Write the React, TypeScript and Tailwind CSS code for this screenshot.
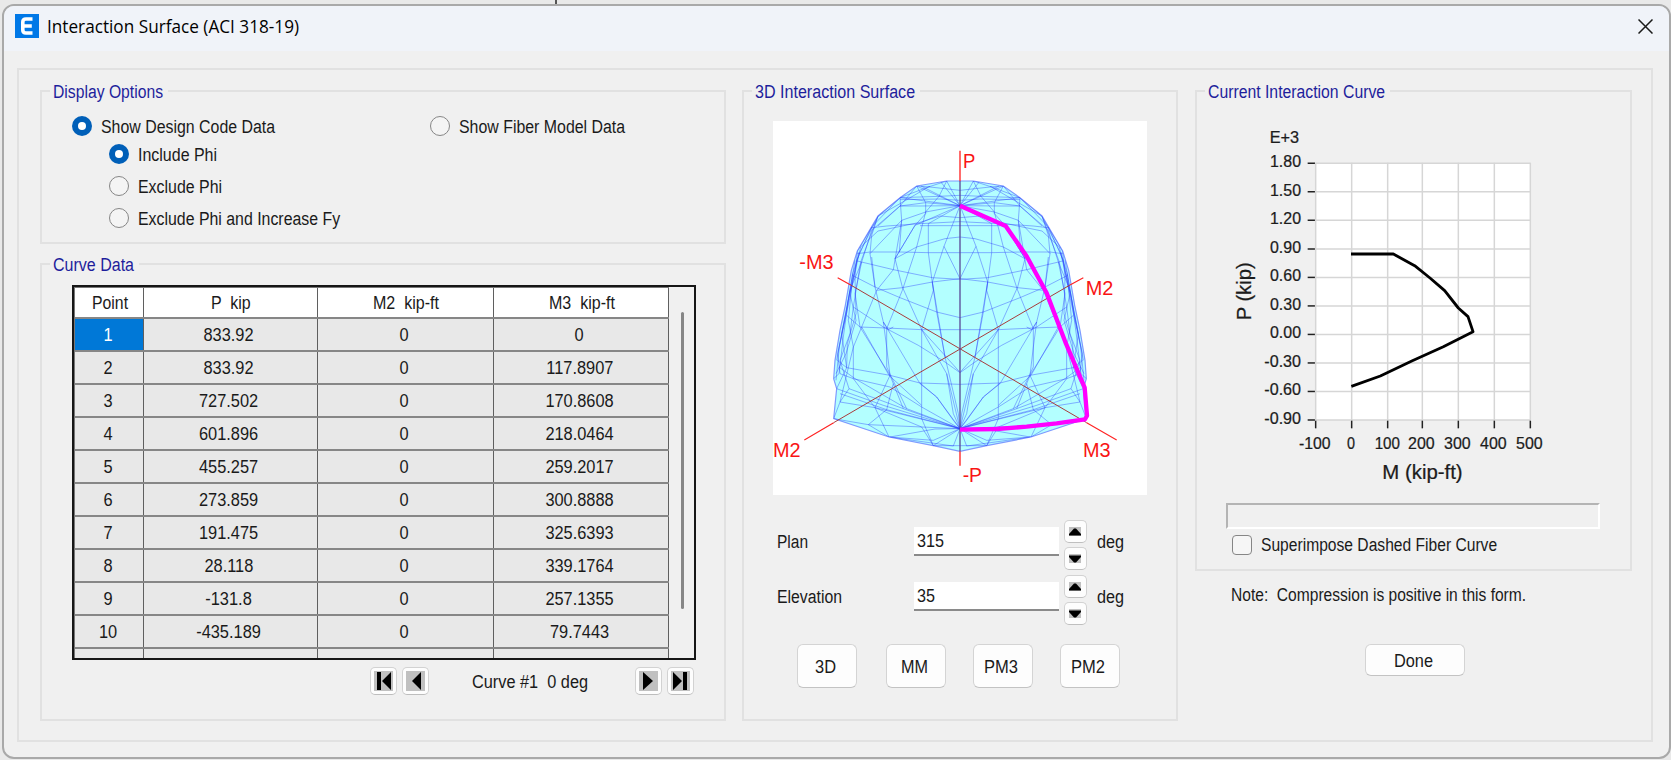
import { useLayoutEffect, useRef, useState } from "react";
import type { ReactNode } from "react";

/* A single line of text, condensed or stretched to an exact width. */
function Fit({ w, className = "", children }: { w: number; className?: string; children: ReactNode }) {
  const ref = useRef<HTMLSpanElement>(null);
  const [scale, setScale] = useState(1);
  useLayoutEffect(() => {
    if (ref.current && ref.current.offsetWidth > 0) setScale(w / ref.current.offsetWidth);
  }, [w]);
  return (
    <span className={`inline-block shrink-0 ${className}`} style={{ width: w }}>
      <span ref={ref} className="inline-block origin-left whitespace-pre" style={{ transform: `scaleX(${scale})` }}>
        {children}
      </span>
    </span>
  );
}

function Group({ title, w, className, children }: { title: string; w: number; className: string; children: ReactNode }) {
  return (
    <fieldset className={`border-2 border-[#e1e1e1] ${className}`}>
      <legend className="ml-[8px] h-5 pr-[5px] pl-[3px] pt-px leading-5 text-[#1e1e9c]">
        <Fit w={w}>{title}</Fit>
      </legend>
      {children}
    </fieldset>
  );
}

function Radio({ on = false, label, w }: { on?: boolean; label: string; w: number }) {
  return (
    <label className="flex h-5 items-center gap-[9px]">
      <span
        className={
          on
            ? "flex size-5 items-center justify-center rounded-full bg-[#005fb8]"
            : "flex size-5 items-center justify-center rounded-full border-[1.5px] border-[#868686] bg-[#f4f4f4]"
        }
      >
        {on && <span className="size-[8px] rounded-full bg-white" />}
      </span>
      <Fit w={w} className="mt-px leading-5">
        {label}
      </Fit>
    </label>
  );
}

const rows: [string, string, string, string][] = [
  ["1", "833.92", "0", "0"],
  ["2", "833.92", "0", "117.8907"],
  ["3", "727.502", "0", "170.8608"],
  ["4", "601.896", "0", "218.0464"],
  ["5", "455.257", "0", "259.2017"],
  ["6", "273.859", "0", "300.8888"],
  ["7", "191.475", "0", "325.6393"],
  ["8", "28.118", "0", "339.1764"],
  ["9", "-131.8", "0", "257.1355"],
  ["10", "-435.189", "0", "79.7443"],
];

const cell = "flex items-center justify-center border-r border-[#5f5f5f] pr-[3px]";
const firstCell = "flex items-center justify-center border-r border-[#5f5f5f] pr-px";
const squeeze = "inline-block scale-x-[.91]";

function CurveTable() {
  return (
    <div className="ml-[30px] mt-[11px] flex h-[375px] w-[624px] overflow-hidden border-2 border-[#161616]">
      <div className="w-[595px] shrink-0 border-l border-t border-[#777]">
        <div className="grid h-[31px] grid-cols-[69px_174px_176px_175px] border-b-2 border-[#868686] bg-white">
          <div className="flex items-center justify-center border-r border-[#5f5f5f] pl-[2px]"><Fit w={36}>Point</Fit></div>
          <div className="flex items-center justify-center border-r border-[#5f5f5f] pl-px"><Fit w={40}>{"P  kip"}</Fit></div>
          <div className="flex items-center justify-center border-r border-[#5f5f5f] pl-px"><Fit w={66}>{"M2  kip-ft"}</Fit></div>
          <div className="flex items-center justify-center border-r border-[#5f5f5f] pl-[2px]"><Fit w={66}>{"M3  kip-ft"}</Fit></div>
        </div>
        {rows.map((r, i) => (
          <div key={r[0]} className="grid h-[33px] grid-cols-[69px_174px_176px_175px] border-b-2 border-[#868686] bg-[#e8e8e8]">
            <div className={i === 0 ? `${firstCell} bg-[#0078d7] text-white` : firstCell}><span className={squeeze}>{r[0]}</span></div>
            <div className={cell}><span className={squeeze}>{r[1]}</span></div>
            <div className={cell}><span className={squeeze}>{r[2]}</span></div>
            <div className={cell}><span className={squeeze}>{r[3]}</span></div>
          </div>
        ))}
        <div className="grid h-[33px] grid-cols-[69px_174px_176px_175px] bg-[#e8e8e8]">
          <div className={cell} /><div className={cell} /><div className={cell} /><div className={cell} />
        </div>
      </div>
      <div className="flex flex-1 justify-center bg-[#f0f0f0] pl-[2px] pt-[25px]">
        <div className="h-[297px] w-[3px] rounded-full bg-[#868686]" />
      </div>
    </div>
  );
}

function NavButton({ d }: { d: string }) {
  return (
    <button className="flex h-[28px] w-[27px] items-center justify-center rounded-[5px] border border-[#d2d2d2] border-b-[#bdbdbd] bg-[#fdfdfd]">
      <svg width="19" height="20" viewBox="0 0 19 20">
        <rect width="19" height="20" fill="#c0c0c0" />
        <path d={d} fill="#000" />
      </svg>
    </button>
  );
}

function Spin({ up = false }: { up?: boolean }) {
  return (
    <button className="flex h-[23px] w-[23px] items-center justify-center rounded-[5px] border-[1.5px] border-[#d2d2d2] border-b-[#bfbfbf] bg-[#fdfdfd] pr-[2px]">
      <svg width="12" height="9" viewBox="0 0 12 9">
        <rect width="12" height="9" fill="#c0c0c0" />
        <path d={up ? "M0 8.5V7L5 1.5H7L12 7V8.5Z" : "M0 1.5V3L5 8.5H7L12 3V1.5Z"} fill="#000" />
      </svg>
    </button>
  );
}

/* ---------- 3D interaction surface ---------- */

const toPath = (pts: [number, number][], close = false) =>
  "M" + pts.map(([x, y]) => `${x} ${y}`).join("L") + (close ? "Z" : "");

const half: [number, number][] = [
  [620, 362], [530, 377], [480, 412], [414, 467], [352, 572], [334, 630], [316, 735], [300, 810], [285, 900], [281, 955], [290, 985], [281, 1075], [447, 1130], [580, 1156], [660, 1173],
];
const outline: [number, number][] = [...half, ...half.slice(0, -1).reverse().map(([x, y]): [number, number] => [1320 - x, y])];

/* Left half of the wire frame; the surface is symmetric about the P axis. */
const wires = [
  // fan at the upper apex
  "M660 436L620 362M660 436L600 362M660 436L530 377M660 436L543 377M660 436L480 412L414 467",
  "M660 436L557 427L480 437L395 510M660 436L557 455L485 480L390 580M660 436L535 437L480 437",
  "M620 362L597 408L557 455M530 377L557 427V460L525 495L465 595M660 390L570 380L530 377",
  "M660 405L597 408L480 412M660 420L600 416L480 418M480 412L485 480L478 575M530 377L480 437L414 497",
  "M480 412L395 500L352 572M414 467L395 525L390 580L405 680M660 472L600 467L540 486L414 512L362 560",
  "M660 484L540 490L440 497L370 505M660 496H540M620 362L565 380L480 430L414 467M570 378L480 412",
  // meridians
  "M660 436L612 558L577 665L590 755L615 890L655 1060L660 1105",
  "M660 436L565 490V577L580 690L545 808V1075L580 1156",
  "M660 436L525 495L465 595L487 680L545 808L620 940L660 1105",
  "M557 455L530 560L487 690L440 805V920L500 1045",
  "M485 480L460 628L410 690L365 800L340 860V955",
  "M395 510L365 605L345 700L360 800L450 945L490 1045",
  "M395 590L405 680L430 785L440 860L450 945L405 1042",
  "M414 467L362 605L340 740L330 820L300 900L327 985L300 1025",
  "M352 572L345 650L348 760L322 850L320 922L290 985",
  "M362 560L335 680L325 780L340 860L300 1025L281 1075",
  "M357 575L325 720L310 830L297 940L281 955M345 600L318 760L293 880L300 940L340 955",
  "M340 640L330 700L348 780L318 880L288 940M365 605L330 690L305 820L320 922",
  // side bands, where the facets are seen edge-on
  "M414 467L360 575L338 640L322 735L306 815L290 900M395 500L350 600L328 720L298 860L288 960",
  // rings
  "M660 530L615 535L530 560L465 595M660 577L565 577L480 575L390 575L352 580",
  "M660 655L577 665L487 682L410 690M352 602L460 628L577 652L660 657",
  "M660 772L590 755L480 712L405 680L337 645M660 808L545 808L440 803L360 800L320 765",
  "M660 937L615 905L535 855L430 800L340 740M430 785L445 808L460 800M660 972L540 968L450 945L320 922L292 900",
  "M430 785L540 970L590 1010L640 1080L660 1105M365 800L447 945L545 1035",
  // fan at the lower apex
  "M660 1105L405 1042L300 1025M660 1105L500 1045L345 955L297 920M660 1105L490 1045L327 985",
  "M660 1105L430 1035L290 985M660 1105L440 1048L300 1000M660 1105L590 1010L540 968M660 1105L545 1040L450 980L340 955",
  "M660 1105L640 1060L620 940M660 1105L385 1093L281 1075M660 1105L585 1106L450 1130",
  "M660 1105L580 1156M660 1105L640 1157M580 1156H660M580 1156L545 1100L405 1042M447 1130L405 1042L340 955",
  "M385 1093L440 1048L460 970M385 1093L447 1130M447 1130L640 1157M660 1105L580 1140L447 1130",
  "M545 808L660 936M577 665L615 890M660 655L612 558",
].join("");

function Surface() {
  return (
    <svg className="ml-[29px] mt-5 block bg-white" width="374" height="374" viewBox="99 182 1122 1122">
      <defs>
        <clipPath id="dome">
          <path d={toPath(outline, true)} />
        </clipPath>
      </defs>
      <path d={toPath(outline, true)} fill="#b3ffff" stroke="#7f9bff" strokeWidth="3.6" />
      <g fill="none" stroke="#2838ff" strokeOpacity=".4" strokeWidth="3" clipPath="url(#dome)">
        <path d={wires} />
        <path d={wires} transform="translate(1320 0) scale(-1 1)" />
      </g>
      <g stroke="#f22" strokeWidth="3.4" fill="none">
        <path d="M660 271V362M660 1173V1216" strokeWidth="4" />
        <path d="M293 652L332 674M990 674L1030 652M281 1087L193 1139M1040 1087L1130 1139" />
      </g>
      <path d="M332 674L1040 1087M990 674L281 1087" stroke="#a83c3c" strokeWidth="3" fill="none" />
      <path d="M660 362V1173" stroke="#5a4a98" strokeWidth="4" />
      <path
        d="M660 436L797 497L860 588L920 698L978 850L1034 982L1041 1066L1035 1077L950 1089L860 1099L770 1106L660 1108"
        fill="none" stroke="#f0f" strokeWidth="13" strokeLinejoin="round"
      />
      <g fill="#f91414" fontFamily="Liberation Sans, Arial, sans-serif" fontSize="60">
        <text x="669" y="324" textLength="37" lengthAdjust="spacingAndGlyphs">P</text>
        <text x="178" y="626" textLength="103" lengthAdjust="spacingAndGlyphs">-M3</text>
        <text x="1037" y="703" textLength="83" lengthAdjust="spacingAndGlyphs">M2</text>
        <text x="99" y="1189" textLength="83" lengthAdjust="spacingAndGlyphs">M2</text>
        <text x="1029" y="1189" textLength="83" lengthAdjust="spacingAndGlyphs">M3</text>
        <text x="668" y="1264" textLength="58" lengthAdjust="spacingAndGlyphs">-P</text>
      </g>
    </svg>
  );
}

/* ---------- P-M curve chart ---------- */

const yLabels = ["1.80", "1.50", "1.20", "0.90", "0.60", "0.30", "0.00", "-0.30", "-0.60", "-0.90"];
const xLabels: [string, number, number, number][] = [
  ["-100", 407, 357, 95], ["0", 515, 501, 24], ["100", 623, 584, 76], ["200", 727, 684, 80], ["300", 835, 792, 80], ["400", 943, 900, 80], ["500", 1051, 1008, 80],
];

function Chart() {
  return (
    <svg className="block" width="433" height="400" viewBox="51 123 1299 1200">
      <rect x="407" y="310" width="644" height="770" fill="#fff" />
      <g fontFamily="Liberation Sans, Arial, sans-serif" fontSize="47" fill="#1c1c1c" stroke="#1c1c1c" strokeWidth=".7">
        <text x="269" y="249" textLength="88" lengthAdjust="spacingAndGlyphs">E+3</text>
        {yLabels.map((t, i) => (
          <g key={t}>
            <path d={`M407 ${310 + i * 85.55}H1051`} stroke="#d6d6d6" strokeWidth="4.5" />
            <path d={`M383 ${310 + i * 85.55}H405`} stroke="#222" strokeWidth="4.5" />
            <text x={t.length > 4 ? 253 : 270} y={321 + i * 85.55} textLength={t.length > 4 ? 110 : 93} lengthAdjust="spacingAndGlyphs">{t}</text>
          </g>
        ))}
        {xLabels.map(([t, x, tx, w]) => (
          <g key={t}>
            <path d={`M${x} 308V1080`} stroke="#d6d6d6" strokeWidth="4.5" />
            <path d={`M${x} 1082V1105`} stroke="#222" strokeWidth="4.5" />
            <text x={tx} y="1167" textLength={w} lengthAdjust="spacingAndGlyphs">{t}</text>
          </g>
        ))}
        <text x="607" y="1257" fontSize="58" textLength="241" lengthAdjust="spacingAndGlyphs">M (kip-ft)</text>
        <text transform="translate(214 781) rotate(-90)" fontSize="58" textLength="174" lengthAdjust="spacingAndGlyphs">P (kip)</text>
      </g>
      <path
        d="M513 582H640L704 617L750 654L794 692L835 744L864 770L879 815L790 860L697 902L601 948L514 979"
        fill="none" stroke="#000" strokeWidth="8.5" strokeLinejoin="round"
      />
    </svg>
  );
}

function AngleField({ label, w, value, vw }: { label: string; w: number; value: string; vw: number }) {
  return (
    <div className="flex h-[50px] items-center">
      <div className="mb-[7px] flex items-center">
        <div className="w-[137px]"><Fit w={w}>{label}</Fit></div>
        <div className="flex h-[29px] w-[145px] items-center border-b-2 border-[#8a8a8a] bg-white pl-[3px]"><Fit w={vw}>{value}</Fit></div>
      </div>
      <div className="ml-[5px] flex w-[23px] flex-col gap-[4px]"><Spin up /><Spin /></div>
      <div className="mb-[7px] ml-[10px]"><Fit w={27}>deg</Fit></div>
    </div>
  );
}

function Button({ label, w, className }: { label: string; w: number; className: string }) {
  return (
    <button className={`flex items-center justify-center rounded-[6px] border-[1.5px] border-[#d4d4d4] border-b-[#c3c3c3] bg-[#fdfdfd] pr-[4px] ${className}`}>
      <Fit w={w} className="mt-px">{label}</Fit>
    </button>
  );
}

export default function App() {
  return (
    <div className="flex h-[760px] w-[1671px] flex-col overflow-hidden bg-[#e9e9e9] font-['Liberation_Sans',Arial,sans-serif] text-[18px] leading-5 text-[#1a1a1a]">
      <div className="h-[4px] pl-[555px]"><div className="h-full w-[2px] bg-[#555]" /></div>
      <div className="ml-[2px] flex h-[755px] w-[1669px] flex-col overflow-hidden rounded-[12px] border-2 border-[#a9a9a9] bg-[#f0f0f0]">
        <header className="flex h-[45px] shrink-0 items-center bg-[#f0f3f9] pl-[11px] pr-[16px]">
          <svg className="mb-[5px]" width="24" height="24" viewBox="0 0 24 24">
            <rect width="24" height="24" fill="#0078e7" />
            <path d="M17.5 5H11Q7.8 5 7.8 8V16Q7.8 19 11 19H17.5M8 12H16.8" fill="none" stroke="#fff" strokeWidth="3.6" />
          </svg>
          <Fit w={252} className="mb-[6px] ml-[8px] font-['Open_Sans',sans-serif] leading-6 text-black">Interaction Surface (ACI 318-19)</Fit>
          <svg className="mb-[4px] ml-auto" width="15" height="15" viewBox="0 0 15 15">
            <path d="M.5.5L14.5 14.5M14.5.5L.5 14.5" stroke="#1a1a1a" strokeWidth="1.5" />
          </svg>
        </header>

        <main className="ml-[13px] mt-[17px] flex h-[674px] w-[1636px] shrink-0 border-2 border-[#e1e1e1] pl-[21px] pt-[11px]">
          <div className="flex w-[686px] flex-col gap-[10px]">
            <Group title="Display Options" w={110} className="h-[163px]">
              <div className="flex pl-[30px] pt-[15px]">
                <div className="w-[358px]"><Radio on label="Show Design Code Data" w={174} /></div>
                <Radio label="Show Fiber Model Data" w={166} />
              </div>
              <div className="flex flex-col gap-[12px] pl-[67px] pt-[8px]">
                <Radio on label="Include Phi" w={79} />
                <Radio label="Exclude Phi" w={84} />
                <Radio label="Exclude Phi and Increase Fy" w={202} />
              </div>
            </Group>
            <Group title="Curve Data" w={81} className="h-[467px]">
              <CurveTable />
              <div className="mt-[7px] flex items-center pl-[328px]">
                <NavButton d="M3 1H7V19H3ZM17 1V19L8 10Z" />
                <div className="w-[5px]" />
                <NavButton d="M15 1V19L6 10Z" />
                <Fit w={116} className="ml-[43px] mt-px">{"Curve #1  0 deg"}</Fit>
                <div className="ml-[47px]"><NavButton d="M4 1V19L14 10Z" /></div>
                <div className="w-[5px]" />
                <NavButton d="M2 1V19L11 10ZM12 1H16V19H12Z" />
              </div>
            </Group>
          </div>

          <Group title="3D Interaction Surface" w={160} className="ml-[16px] h-[640px] w-[436px]">
            <Surface />
            <div className="ml-[33px] mt-[25px] flex flex-col gap-[5px]">
              <AngleField label="Plan" w={31} value="315" vw={27} />
              <AngleField label="Elevation" w={65} value="35" vw={18} />
            </div>
            <div className="mt-[19px] flex pl-[53px]">
              <Button label="3D" w={21} className="h-[44px] w-[60px]" />
              <Button label="MM" w={27} className="ml-[29px] h-[44px] w-[60px]" />
              <Button label="PM3" w={34} className="ml-[27px] h-[44px] w-[60px]" />
              <Button label="PM2" w={34} className="ml-[27px] h-[44px] w-[60px]" />
            </div>
          </Group>

          <div className="ml-[17px] w-[437px]">
            <Group title="Current Interaction Curve" w={177} className="h-[490px]">
              <Chart />
              <div className="ml-[29px] mt-[2px] h-[26px] w-[374px] border-2 border-b-white border-l-[#b4b4b4] border-r-white border-t-[#b4b4b4]" />
              <label className="ml-[35px] mt-[6px] flex h-5 items-center gap-[9px]">
                <span className="size-5 rounded-[4px] border-[1.5px] border-[#868686] bg-[#f6f6f6]" />
                <Fit w={236}>Superimpose Dashed Fiber Curve</Fit>
              </label>
            </Group>
            <div className="ml-[36px] mt-[14px]"><Fit w={295}>{"Note:  Compression is positive in this form."}</Fit></div>
            <div className="ml-[170px] mt-[39px]"><Button label="Done" w={39} className="h-[32px] w-[100px]" /></div>
          </div>
        </main>
      </div>
    </div>
  );
}
